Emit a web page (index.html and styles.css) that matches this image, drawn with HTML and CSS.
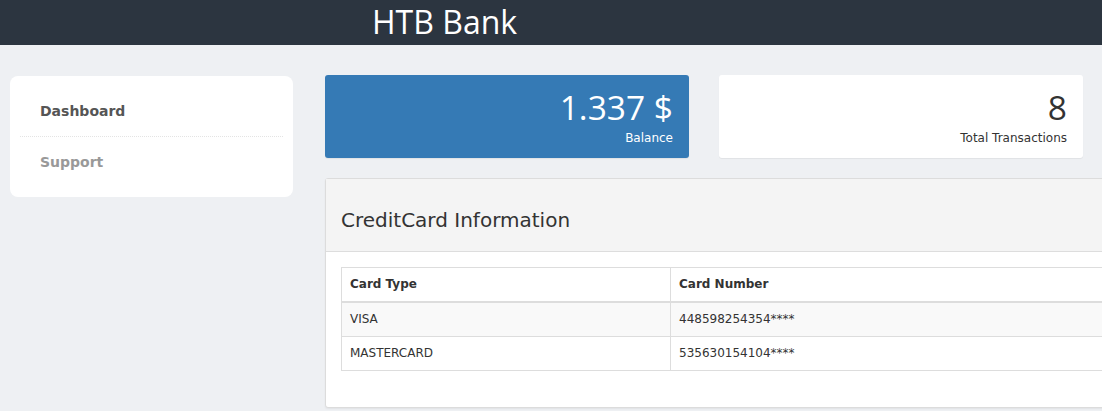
FILE: index.html
```html
<!DOCTYPE html>
<html>
<head>
<meta charset="utf-8">
<title>HTB Bank</title>
<link rel="stylesheet" href="styles.css">
</head>
<body>
<header class="topbar">
  <div class="brand">HTB Bank</div>
</header>
<div class="page">
  <aside class="sidebar">
    <ul class="nav">
      <li class="nav-item active">Dashboard</li>
      <li class="nav-item">Support</li>
    </ul>
  </aside>
  <main class="main">
    <div class="stats">
      <div class="stat stat-blue">
        <div class="stat-value">1.337 $</div>
        <div class="stat-label">Balance</div>
      </div>
      <div class="stat stat-white">
        <div class="stat-value">8</div>
        <div class="stat-label">Total Transactions</div>
      </div>
    </div>
    <section class="panel">
      <div class="panel-heading">CreditCard Information</div>
      <div class="panel-body">
        <table class="cards">
          <thead>
            <tr><th class="col-type">Card Type</th><th>Card Number</th></tr>
          </thead>
          <tbody>
            <tr class="odd"><td>VISA</td><td>448598254354****</td></tr>
            <tr><td>MASTERCARD</td><td>535630154104****</td></tr>
          </tbody>
        </table>
      </div>
    </section>
  </main>
</div>
</body>
</html>
```
FILE: styles.css
```css
html, body {
  margin: 0;
  padding: 0;
  overflow: hidden;
}
body {
  background: #eef0f3;
  font-family: "DejaVu Sans", sans-serif;
  color: #333;
  width: 1102px;
  height: 411px;
}
.topbar {
  height: 45px;
  background: #2c3540;
  padding-left: 372px;
  box-sizing: border-box;
}
.brand {
  font-family: "Open Sans", sans-serif;
  font-size: 32px;
  line-height: 43px;
  color: #fff;
}
.page {
  display: flex;
  align-items: flex-start;
  width: 1500px;
  padding: 30px 0 0 10px;
}
.sidebar {
  width: 283px;
  background: #fff;
  border-radius: 8px;
  padding: 10px;
  box-sizing: border-box;
  margin-top: 1px;
  flex: none;
}
.nav {
  list-style: none;
  margin: 0;
  padding: 0;
}
.nav-item {
  height: 50px;
  line-height: 50px;
  padding-left: 20px;
  font-size: 14px;
  font-weight: bold;
  color: #999;
}
.nav-item.active {
  color: #555;
  border-bottom: 1px dotted #e4e4e4;
}
.main {
  margin-left: 32px;
  width: 1150px;
  flex: none;
}
.stats {
  display: flex;
  gap: 30px;
}
.stat {
  width: 364px;
  height: 83px;
  box-sizing: border-box;
  border-radius: 3px;
  padding: 13px 16px 0 15px;
  text-align: right;
  box-shadow: 0 1px 1px rgba(0,0,0,0.06);
}
.stat-blue {
  background: #357ab5;
  color: #fff;
}
.stat-white {
  background: #fff;
  color: #333;
}
.stat-value {
  font-family: "Open Sans", sans-serif;
  font-size: 33.5px;
  line-height: 38px;
}
.stat-label {
  font-size: 12px;
  line-height: 14px;
  margin-top: 5px;
}
.panel {
  margin-top: 20px;
  background: #fff;
  border: 1px solid #dcdcdc;
  border-radius: 3px;
  box-shadow: 0 1px 2px rgba(0,0,0,0.06);
}
.panel-heading {
  background: #f4f4f4;
  border-bottom: 1px solid #ddd;
  padding: 27px 15px 17px 15px;
  font-size: 20px;
  line-height: 28px;
  color: #333;
}
.panel-body {
  padding: 15px 15px 36px 15px;
}
.cards {
  width: 100%;
  border-collapse: collapse;
  font-size: 12px;
}
.cards th, .cards td {
  border: 1px solid #ddd;
  padding: 8px;
  line-height: 17px;
  text-align: left;
}
.cards th {
  font-weight: bold;
  border-bottom-width: 2px;
}
.col-type {
  width: 312px;
}
.cards tr.odd td {
  background: #f9f9f9;
}
```
